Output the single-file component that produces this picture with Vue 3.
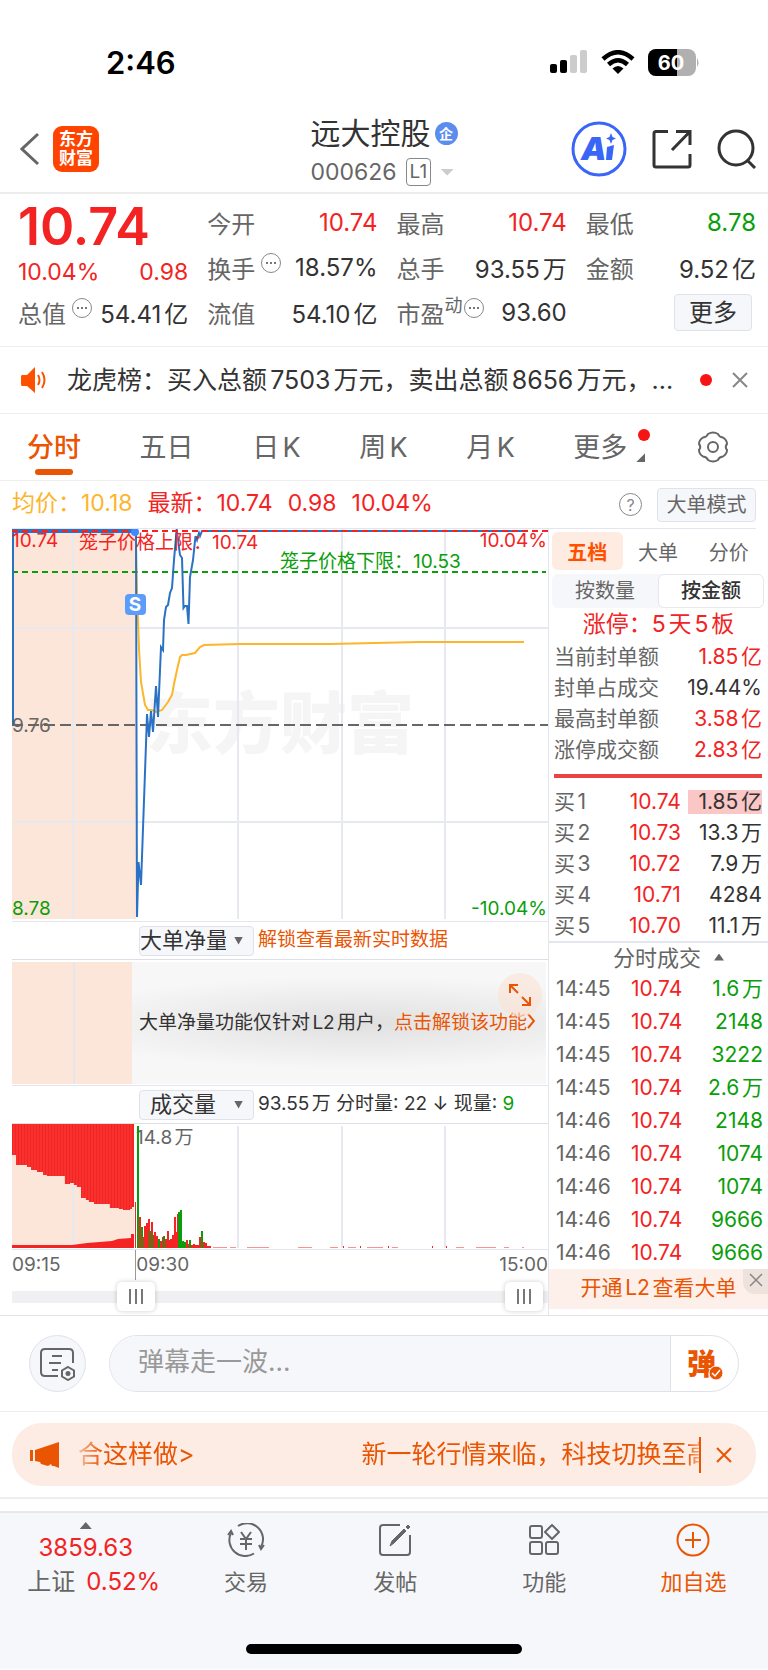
<!--个股行情页-->

<template>
  <div class="stock-page">
    <!-- 状态栏 -->
    <div class="status-bar">
      <span class="time">2:46</span>
      <div class="status-icons">
        <svg width="38" height="24" viewBox="0 0 38 24">
          <rect x="0" y="14" width="7" height="9" rx="2" fill="#000" />
          <rect x="10" y="10" width="7" height="13" rx="2" fill="#000" />
          <rect x="20" y="5" width="7" height="18" rx="2" fill="#ccc" />
          <rect x="30" y="0" width="7" height="23" rx="2" fill="#ccc" />
        </svg>
        <svg width="34" height="24" viewBox="0 0 34 24">
          <path d="M2 9 Q17 -4.500 32 9" fill="none" stroke="#000" stroke-width="4.500" />
          <path d="M7.500 14.500 Q17 6 26.500 14.500" fill="none" stroke="#000" stroke-width="4.500" />
          <path d="M11.500 18.500 Q17 13.500 22.500 18.500 L17 24 Z" fill="#000" />
        </svg>
        <svg width="52" height="27" viewBox="0 0 52 27">
          <rect x="0" y="0" width="48" height="27" rx="8" fill="#b0b0b0" />
          <path d="M8 0 H29 V27 H8 A8 8 0 0 1 0 19 V8 A8 8 0 0 1 8 0 Z" fill="#000" />
          <path d="M49 9 Q52 13.500 49 18 Z" fill="#b0b0b0" />
          <text x="23" y="21" text-anchor="middle" class="battery-num">60</text>
        </svg>
      </div>
    </div>

    <!-- 顶部导航 -->
    <header class="header">
      <div class="header-left">
        <button class="icon-btn" aria-label="返回">
          <svg width="20" height="34" viewBox="0 0 20 34">
            <path d="M18 2 L2 17 L18 32" fill="none" stroke="#666" stroke-width="3" />
          </svg>
        </button>
        <a href="#" class="logo"><span>东方</span><span>财富</span></a>
      </div>
      <div class="header-title">
        <h1>远大控股<i class="ent-badge">企</i></h1>
        <div class="code-row">
          <span>000626</span>
          <span class="level">L1</span>
          <i class="tri-down light"></i>
        </div>
      </div>
      <div class="header-right">
        <button class="icon-btn" aria-label="智能助手">
          <svg width="56" height="56" viewBox="0 0 56 56">
            <circle cx="28" cy="28" r="26" fill="#fff" stroke="#3a66f8" stroke-width="3" />
            <text x="10" y="39" class="ai-text">A</text>
            <path d="M36 26 L43 24 L41 39 L35 39 Z" fill="#3a66f8" />
            <path d="M40 12 L41.500 16 L45 17.500 L41.500 19 L40 23 L38.500 19 L35 17.500 L38.500 16 Z" fill="#3a66f8" />
          </svg>
        </button>
        <button class="icon-btn" aria-label="分享">
          <svg width="40" height="40" viewBox="0 0 40 40" fill="none" stroke="#333" stroke-width="3">
            <path d="M16 2.500 H4 Q2 2.500 2 4.500 V36 Q2 38 4 38 H36 Q38 38 38 36 V25" />
            <path d="M24 2.500 H38 V16 M38 2.500 L20 21" />
          </svg>
        </button>
        <button class="icon-btn" aria-label="搜索">
          <svg width="40" height="40" viewBox="0 0 40 40" fill="none" stroke="#333" stroke-width="3">
            <circle cx="19" cy="19" r="17" />
            <path d="M30 31 L38 39" />
          </svg>
        </button>
      </div>
    </header>

    <!-- 行情数据 -->
    <section class="quote">
      <div class="quote-col">
        <strong class="price">10.74</strong>
        <div class="quote-item red change"><span>10.04%</span><span>0.98</span></div>
        <div class="quote-item">
          <label>总值<i class="dots"></i></label><span>54.41亿</span>
        </div>
      </div>
      <div v-for="(col, i) in quoteCols" :key="i" class="quote-col">
        <div v-for="item in col" :key="item.label" class="quote-item">
          <label>{{ item.label }}<sup v-if="item.sup">{{ item.sup }}</sup><i v-if="item.dots" class="dots"></i></label>
          <span :class="item.color">{{ item.value }}</span>
        </div>
        <button v-if="i === 2" class="more-btn">更多</button>
      </div>
    </section>

    <!-- 公告 -->
    <section class="notice">
      <svg width="26" height="28" viewBox="0 0 26 28">
        <path d="M1 9 H6 L14 1 V27 L6 20 H1 Q0 20 0 18 V11 Q0 9 1 9 Z" fill="#ff5000" />
        <path d="M17 9 Q20 14 17 19 M21 6 Q26 14 21 22" fill="none" stroke="#ff5000" stroke-width="2" />
      </svg>
      <p>龙虎榜：买入总额7503万元，卖出总额8656万元，...</p>
      <i class="red-dot"></i>
      <button class="icon-btn" aria-label="关闭公告">
        <svg width="16" height="16" viewBox="0 0 16 16" stroke="#888" stroke-width="2"><path d="M1 1 L15 15 M15 1 L1 15" /></svg>
      </button>
    </section>

    <!-- 周期切换 -->
    <nav class="tabs">
      <button v-for="tab in tabs" :key="tab" class="tab" :class="{ active: tab === activeTab }" @click="activeTab = tab">
        {{ tab }}
      </button>
      <button class="tab tab-more">更多<i class="red-dot"></i><i class="corner"></i></button>
      <button class="icon-btn" aria-label="设置">
        <svg width="32" height="32" viewBox="0 0 32 32" fill="none" stroke="#666" stroke-width="2">
          <path d="M11 3 Q16 0 21 3 Q22 6 26 6.500 Q30 9 30 13 Q27.500 16 30 19 Q30 23 26 25.500 Q22 26 21 29 Q16 32 11 29 Q10 26 6 25.500 Q2 23 2 19 Q4.500 16 2 13 Q2 9 6 6.500 Q10 6 11 3 Z" />
          <circle cx="16" cy="16" r="5" />
        </svg>
      </button>
    </nav>

    <div class="legend">
      <span class="avg">均价：10.18</span>
      <span class="red">最新：10.74</span>
      <span class="red">0.98</span>
      <span class="red">10.04%</span>
      <button class="help" aria-label="帮助">?</button>
      <button class="mode-btn">大单模式</button>
    </div>

    <main class="board">
      <!-- 分时图 -->
      <div class="charts">
        <svg class="chart" viewBox="0 0 536 392">
          <rect x="0" y="0" width="124" height="390" fill="#fce5d9" />
          <text x="134" y="219" class="watermark">东方财富</text>
          <g class="grid">
            <path d="M0 99 H536 M0 293 H536" />
            <path d="M61 0 V390 M226 0 V390 M330 0 V390 M433 0 V390" />
          </g>
          <path d="M0 196 H536" stroke="#666" stroke-width="2" stroke-dasharray="11 5" />
          <path d="M0 43 H534" stroke="#0a9e0a" stroke-width="2" stroke-dasharray="6 4" />
          <polyline :points="avgLine" fill="none" stroke="#fdb52c" stroke-width="2" />
          <polyline :points="priceLine" fill="none" stroke="#2b72c4" stroke-width="2" />
          <path d="M0 2 H124" stroke="#2b72c4" stroke-width="4" />
          <path d="M0 2 H536" stroke="#f32323" stroke-width="2" stroke-dasharray="6 4" />
          <circle cx="123" cy="3" r="4" fill="#3d8bff" />
          <g class="chart-text">
            <text x="0" y="18" fill="#f32323">10.74</text>
            <text x="67" y="20" fill="#f32323">笼子价格上限：10.74</text>
            <text x="268" y="39" fill="#0a9e0a">笼子价格下限：10.53</text>
            <text x="535" y="18" fill="#f32323" text-anchor="end">10.04%</text>
            <text x="0" y="203" fill="#666">9.76</text>
            <text x="0" y="386" fill="#0a9e0a">8.78</text>
            <text x="535" y="386" fill="#0a9e0a" text-anchor="end">-10.04%</text>
          </g>
          <rect x="113" y="65" width="21" height="21" rx="4" fill="#5c9dfb" />
          <text x="123" y="82" text-anchor="middle" class="sell-mark">S</text>
        </svg>

        <div class="sub-head">
          <div class="select-wrap">
            <select aria-label="副图指标一"><option>大单净量</option><option>成交量</option></select>
          </div>
          <a href="#" class="orange">解锁查看最新实时数据</a>
        </div>
        <div class="locked">
          <div class="locked-pre"></div>
          <div class="locked-body">
            <p>大单净量功能仅针对L2用户，<a href="#" class="orange">点击解锁该功能<svg width="8" height="16" viewBox="0 0 8 16" fill="none" stroke="#ea5504" stroke-width="2"><path d="M1 1 L7 8 L1 15" /></svg></a></p>
            <button class="expand" aria-label="展开">
              <svg width="24" height="24" viewBox="0 0 24 24" fill="none" stroke="#ea5504" stroke-width="2">
                <path d="M2 10 V2 H10 M2 2 L10 10 M22 14 V22 H14 M22 22 L14 14" />
              </svg>
            </button>
          </div>
        </div>
        <div class="sub-head">
          <div class="select-wrap">
            <select aria-label="副图指标二"><option>成交量</option><option>大单净量</option></select>
          </div>
          <span>93.55万 分时量: 22 ↓ 现量: <b class="green">9</b></span>
        </div>
        <svg class="chart volume" viewBox="0 0 536 125">
          <rect x="0" y="0" width="122" height="124" fill="#fce5d9" />
          <path class="grid" d="M61 0 V124 M226 2 V124 M330 2 V124 M433 2 V124" />
          <path :d="preTop" fill="#f52424" />
          <path d="M0 124 V121 L60 121 L75 119 L100 117 L106 115 L119 114 V110 H122 V124 Z" fill="#f52424" />
          <path :d="stripes" stroke="#fb6a5e" stroke-width="0.400" />
          <text x="124" y="20" class="chart-text" fill="#666">14.8万</text>
          <rect
            v-for="(bar, i) in volumeBars" :key="i"
            :x="bar[0]" :y="124 - bar[1]" :width="bar[3] || 2" :height="bar[1]"
            :fill="bar[2] ? '#0a9e0a' : '#f52424'"
          />
        </svg>
        <div class="axis"><span>09:15</span><span class="open">09:30</span><span>15:00</span></div>
        <div class="range">
          <input v-model="rangeStart" type="range" min="0" max="100" aria-label="起始时间">
          <input v-model="rangeEnd" type="range" min="0" max="100" aria-label="结束时间">
        </div>
      </div>

      <!-- 盘口 -->
      <aside class="depth">
        <div class="depth-tabs">
          <button v-for="t in depthTabs" :key="t" :class="{ active: t === depthTab }" @click="depthTab = t">{{ t }}</button>
        </div>
        <div class="segment">
          <button v-for="m in modes" :key="m" :class="{ active: m === mode }" @click="mode = m">{{ m }}</button>
        </div>
        <p class="limit-up">涨停：5天5板</p>
        <table class="seal">
          <tbody>
            <tr v-for="row in sealRows" :key="row[0]">
              <th>{{ row[0] }}</th>
              <td :class="row[2]">{{ row[1] }}</td>
            </tr>
          </tbody>
        </table>
        <div class="ratio-bar"></div>
        <table class="levels">
          <tbody>
            <tr v-for="(row, i) in buyRows" :key="row[0]">
              <th>买{{ i + 1 }}</th>
              <td class="red">{{ row[0] }}</td>
              <td><span :class="{ mark: i === 0 }">{{ row[1] }}</span></td>
            </tr>
          </tbody>
        </table>
        <button class="deal-head">分时成交<i class="tri-up"></i></button>
        <table class="deals">
          <tbody>
            <tr v-for="(row, i) in deals" :key="i">
              <th>{{ row[0] }}</th>
              <td class="red">10.74</td>
              <td class="green">{{ row[1] }}</td>
            </tr>
          </tbody>
        </table>
        <div class="open-l2">
          <a href="#" class="orange">开通L2查看大单</a>
          <button class="l2-close" aria-label="关闭">
            <svg width="14" height="14" viewBox="0 0 14 14" stroke="#888" stroke-width="1.500"><path d="M1 1 L13 13 M13 1 L1 13" /></svg>
          </button>
        </div>
      </aside>
    </main>

    <!-- 弹幕 -->
    <section class="danmu">
      <button class="danmu-set" aria-label="弹幕设置">
        <svg width="36" height="34" viewBox="0 0 36 34" fill="none" stroke="#666" stroke-width="2">
          <path d="M18 29 H5 Q1 29 1 25 V6 Q1 2 5 2 H29 Q33 2 33 6 V16" />
          <path d="M12 9 H22 M9 16 H21 M12 23 H18" />
          <path d="M28 20 L34 23.500 V29.500 L28 33 L22 29.500 V23.500 Z" />
          <circle cx="28" cy="26.500" r="1.500" fill="#666" />
        </svg>
      </button>
      <div class="danmu-box">
        <input type="text" placeholder="弹幕走一波..." aria-label="弹幕内容">
        <button class="danmu-toggle" aria-label="弹幕开关">
          弹
          <svg width="16" height="16" viewBox="0 0 16 16"><circle cx="8" cy="8" r="7" fill="#ea5504" stroke="#fff" /><path d="M4 8 L7 11 L12 5" fill="none" stroke="#fff" stroke-width="1.500" /></svg>
        </button>
      </div>
    </section>

    <!-- 跑马灯 -->
    <section class="banner-wrap">
      <div class="banner">
        <svg width="30" height="26" viewBox="0 0 30 26" fill="#ea5504">
          <path d="M0 8 H3 V19 H0 Z M5 8 L29 0 V26 L24 24 L22 24 L21 22 L18 24 L11 22 L10 20 L5 19 Z" />
        </svg>
        <div class="marquee"><span>合这样做&gt;</span><span>新一轮行情来临，科技切换至高</span></div>
        <button class="icon-btn" aria-label="关闭">
          <svg width="16" height="16" viewBox="0 0 16 16" stroke="#ea5504" stroke-width="2"><path d="M1 1 L15 15 M15 1 L1 15" /></svg>
        </button>
      </div>
    </section>

    <!-- 底部导航 -->
    <footer class="footer">
      <div class="footer-nav">
        <a href="#" class="index">
          <i class="tri-up"></i>
          <span class="red">3859.63</span>
          <span class="index-name">上证<em class="red">0.52%</em></span>
        </a>
        <a href="#">
          <svg width="38" height="34" viewBox="0 0 38 34" fill="none" stroke="#666" stroke-width="2">
            <path d="M11 3 A16 16 0 0 1 34 24 M27 30.500 A16 16 0 0 1 4 10" />
            <path d="M37 22 L34 26 L32 22 M1 12 L4 8 L6 12" />
            <path d="M14 9 L19 16 L24 9 M13 16 H25 M13 21 H25 M19 16 V27" />
          </svg>
          <span>交易</span>
        </a>
        <a href="#">
          <svg width="34" height="34" viewBox="0 0 34 34" fill="none" stroke="#666" stroke-width="2">
            <path d="M22 2 H5 Q2 2 2 5 V29 Q2 32 5 32 H29 Q32 32 32 29 V12" />
            <path d="M12 23 L14 18 L26 6 L28 8 L16 20 Z M28 4 L30 2 L32 4 L30 6 Z" fill="#666" stroke-width="1" />
          </svg>
          <span>发帖</span>
        </a>
        <a href="#">
          <svg width="32" height="34" viewBox="0 0 32 34" fill="none" stroke="#666" stroke-width="2">
            <rect x="2" y="3" width="12" height="12" rx="2" />
            <rect x="2" y="19" width="12" height="12" rx="2" />
            <rect x="18" y="19" width="12" height="12" rx="2" />
            <path d="M24 2 L31 9 L24 16 L17 9 Z" stroke-linejoin="round" />
          </svg>
          <span>功能</span>
        </a>
        <a href="#" class="orange">
          <svg width="34" height="34" viewBox="0 0 34 34" fill="none" stroke="#ea5504" stroke-width="2">
            <circle cx="17" cy="17" r="15.500" />
            <path d="M17 9 V25 M9 17 H25" />
          </svg>
          <span>加自选</span>
        </a>
      </div>
      <div class="home-bar"></div>
    </footer>
  </div>
</template>

<script setup>
import { ref } from 'vue'

const tabs = ['分时', '五日', '日K', '周K', '月K']
const activeTab = ref('分时')
const depthTabs = ['五档', '大单', '分价']
const depthTab = ref('五档')
const modes = ['按数量', '按金额']
const mode = ref('按金额')
const rangeStart = ref(21)
const rangeEnd = ref(99)

const quoteCols = [
  [
    { label: '今开', value: '10.74', color: 'red' },
    { label: '换手', value: '18.57%', dots: true },
    { label: '流值', value: '54.10亿' }
  ],
  [
    { label: '最高', value: '10.74', color: 'red' },
    { label: '总手', value: '93.55万' },
    { label: '市盈', value: '93.60', sup: '动', dots: true }
  ],
  [
    { label: '最低', value: '8.78', color: 'green' },
    { label: '金额', value: '9.52亿' }
  ]
]

const sealRows = [
  ['当前封单额', '1.85亿', 'red'],
  ['封单占成交', '19.44%', ''],
  ['最高封单额', '3.58亿', 'red'],
  ['涨停成交额', '2.83亿', 'red']
]

const buyRows = [
  ['10.74', '1.85亿'],
  ['10.73', '13.3万'],
  ['10.72', '7.9万'],
  ['10.71', '4284'],
  ['10.70', '11.1万']
]

const deals = [
  ['14:45', '1.6万'],
  ['14:45', '2148'],
  ['14:45', '3222'],
  ['14:45', '2.6万'],
  ['14:46', '2148'],
  ['14:46', '1074'],
  ['14:46', '1074'],
  ['14:46', '9666'],
  ['14:46', '9666']
]

// 价格线
const priceLine = '1,196 1,2 124,2 124.5,200 125,388 126.5,333 129,356 134,215 135,185 137,208 139,182 141,203 144,157 146,188 149,118 151,121 152,91 154,78 156,76 158,64 160,59 162,31 164.7,0 166,11 168,26 170,29 171.500,79 173,77 175,77 176.500,95 178,48 181,31 183.500,7 185,11 187,4 188,7 190,2 511,2'

// 均价线
const avgLine = '124,16 125,60 127,120 129,153 133,176 136,181 140,181 144,183 150,181 156,173 160,166 162,155 165,141 168,128 170,126 174,126 183,124 188,118 192,116 228,115 318,115 408,113 512,113'

// 集合竞价未匹配量 [x, 高度]
const preSteps = [
  [0, 31], [4, 41], [15, 43], [19, 46], [25, 48], [31, 51], [35, 52], [53, 60], [58, 59], [62, 61],
  [65, 63], [69, 74], [74, 76], [77, 78], [82, 80], [98, 84], [107, 85], [111, 86], [118, 85], [120, 83]
]
const preTop = 'M0 0 ' + preSteps.map(([x, h]) => `H${x} V${h}`).join(' ') + ' H122 V0 Z'
const stripes = Array.from({ length: 40 }, (_, i) => `M${i * 3 + 2} 0 V${preSteps.filter(s => s[0] <= i * 3 + 2).pop()[1]}`).join(' ')

// 成交量柱 [x, 高度, 是否绿色, 宽度]
const volumeBars = [
  [123, 46, 0, 1], [125, 122, 1], [127, 31, 0], [129, 21, 1], [131, 11, 0], [132, 22, 0], [134, 25, 0], [136, 29, 0],
  [137, 17, 1], [139, 26, 0], [141, 13, 1], [142, 16, 0], [144, 12, 0], [146, 9, 1], [148, 7, 0], [150, 11, 0],
  [151, 12, 1], [153, 9, 0], [155, 17, 0], [156, 8, 0], [158, 9, 0], [160, 13, 0], [162, 31, 0], [163, 16, 0],
  [165, 34, 0], [166, 36, 1], [168, 38, 1], [170, 7, 1], [172, 6, 1], [174, 8, 0], [176, 4, 0], [177, 8, 1],
  [179, 3, 0], [181, 4, 0], [183, 3, 0], [185, 3, 0], [187, 11, 0], [189, 17, 1], [191, 6, 0], [193, 5, 0],
  [195, 2, 0], [197, 2, 0], [201, 0.5, 0, 14], [218, 0.5, 0, 6], [235, 0.5, 0, 22], [286, 0.5, 0, 14], [318, 0.5, 0, 8],
  [331, 2, 0, 1], [336, 0.5, 0, 8], [348, 2, 0, 1], [355, 0.5, 0, 16], [376, 2, 0, 1], [380, 0.5, 0, 6], [420, 2, 0, 1],
  [434, 2, 0, 1], [444, 0.5, 0, 8], [464, 0.5, 0, 20], [492, 0.5, 0, 5], [510, 0.5, 0, 2]
]
</script>

<style>
body {
  margin: 0;
  background: #fff;
}
</style>

<style scoped>
.stock-page {
  font-family: Inter, "Noto Sans CJK SC", sans-serif;
  color: #333;
  background: #fff;
  text-autospace: normal;
}

button,
input,
select {
  font-family: inherit;
  color: inherit;
  text-autospace: inherit;
}

button {
  padding: 0;
  border: none;
  background: none;
  cursor: pointer;
}

a {
  color: inherit;
  text-decoration: none;
}

i,
em {
  font-style: normal;
}

svg {
  flex: none;
}

.icon-btn {
  display: flex;
}

.red {
  color: #f32323;
}

.green {
  color: #0a9e0a;
}

.orange {
  color: #ea5504;
}

.red-dot {
  width: 12px;
  height: 12px;
  border-radius: 50%;
  background: #f71414;
}

.tri-up,
.tri-down {
  display: inline-block;
  width: 12px;
  height: 7px;
  background: #666;
  clip-path: polygon(50% 0, 100% 100%, 0 100%);
}

.tri-down.light {
  width: 14px;
  background: #ccc;
  clip-path: polygon(0 0, 100% 0, 50% 100%);
}

/* 状态栏 */
.status-bar {
  display: flex;
  justify-content: space-between;
  align-items: center;
  height: 104px;
  padding: 20px 68px 0 106px;
  box-sizing: border-box;
}

.time {
  font-size: 31px;
  font-weight: 600;
  color: #000;
}

.status-icons {
  display: flex;
  align-items: center;
  gap: 13px;
}

.battery-num {
  font-size: 20px;
  font-weight: 700;
  fill: #fff;
}

/* 顶部导航 */
.header {
  display: grid;
  grid-template-columns: 1fr auto 1fr;
  align-items: center;
  height: 90px;
  padding: 2px 11px 0;
  box-sizing: border-box;
  border-bottom: 2px solid #ececec;
}

.header-left {
  display: flex;
  align-items: center;
  gap: 13px;
  padding-left: 9px;
}

.logo {
  display: flex;
  flex-direction: column;
  align-items: center;
  justify-content: center;
  width: 46px;
  height: 46px;
  border-radius: 9px;
  background: #ff4400;
  color: #fff;
  font-size: 17px;
  font-weight: 700;
  line-height: 19px;
}

.header-title {
  padding-top: 8px;
}

.header-title h1 {
  display: flex;
  align-items: center;
  gap: 4px;
  margin: 0;
  font-size: 30px;
  font-weight: 400;
  line-height: 38px;
}

.ent-badge {
  width: 23px;
  height: 23px;
  border-radius: 50%;
  background: #5b8def;
  color: #fff;
  font-size: 14px;
  font-weight: 700;
  line-height: 23px;
  text-align: center;
}

.code-row {
  display: flex;
  align-items: center;
  gap: 9px;
  height: 40px;
  color: #666;
  font-size: 23px;
}

.level {
  padding: 0 3px;
  border: 1px solid #888;
  border-radius: 4px;
  font-size: 19px;
  line-height: 26px;
}

.header-right {
  display: flex;
  align-items: center;
  justify-content: flex-end;
  gap: 25px;
}

.ai-text {
  font-size: 32px;
  font-weight: 900;
  font-style: italic;
  fill: #3a66f8;
}

/* 行情数据 */
.quote {
  display: grid;
  grid-template-columns: repeat(4, 1fr);
  gap: 19px;
  padding: 6px 12px 11px 18px;
  border-bottom: 1px solid #eee;
}

.quote-item {
  display: flex;
  align-items: center;
  justify-content: space-between;
  height: 45px;
  font-size: 24px;
  white-space: nowrap;
}

.quote-item label {
  display: flex;
  align-items: center;
  color: #666;
}

.quote-item sup {
  align-self: flex-start;
  font-size: 18px;
  line-height: 22px;
}

.quote .change {
  height: 36px;
  font-size: 23px;
}

.price {
  display: block;
  height: 54px;
  color: #f32323;
  font-size: 52px;
  font-weight: 600;
  line-height: 54px;
}

.dots {
  position: relative;
  width: 18px;
  height: 18px;
  margin: 0 0 10px 6px;
  border: 1px solid #888;
  border-radius: 50%;
}

.quote-item sup + .dots {
  margin-left: 1px;
}

.dots::after {
  position: absolute;
  top: 8px;
  left: 8px;
  width: 2px;
  height: 2px;
  background: #777;
  box-shadow: -4px 0 #777, 4px 0 #777;
  content: "";
}

.more-btn {
  display: block;
  width: 78px;
  height: 37px;
  margin: 4px 4px 0 auto;
  border: 1px solid #dfe2ea;
  border-radius: 4px;
  background: #f6f7fa;
  font-size: 24px;
  line-height: 32px;
}

/* 公告 */
.notice {
  display: flex;
  align-items: center;
  height: 66px;
  padding: 0 20px 0 21px;
  border-bottom: 1px solid #eee;
}

.notice p {
  flex: 1;
  overflow: hidden;
  margin: 0 20px;
  font-size: 25px;
  line-height: 36px;
  white-space: nowrap;
}

.notice .icon-btn {
  margin-left: 20px;
}

/* 周期切换 */
.tabs {
  display: flex;
  align-items: center;
  justify-content: space-between;
  height: 66px;
  padding: 0 39px 0 27px;
  border-bottom: 1px solid #eee;
}

.tab {
  position: relative;
  height: 66px;
  padding-bottom: 3px;
  color: #666;
  font-size: 27px;
}

.tab.active {
  color: #ea5504;
  font-weight: 500;
}

.tab.active::after {
  position: absolute;
  bottom: 5px;
  left: 8px;
  right: 8px;
  height: 6px;
  border-radius: 3px;
  background: #ea5504;
  content: "";
}

.tab-more {
  padding-right: 11px;
}

.tab-more .red-dot {
  position: absolute;
  top: 15px;
  right: -12px;
}

.corner {
  position: absolute;
  right: -7px;
  bottom: 18px;
  width: 9px;
  height: 9px;
  background: #666;
  clip-path: polygon(100% 0, 100% 100%, 0 100%);
}

/* 图例 */
.legend {
  display: flex;
  align-items: center;
  gap: 15px;
  height: 47px;
  margin: 0 12px;
  border-bottom: 1px solid #e3e6ee;
  font-size: 23px;
  line-height: 28px;
}

.legend span {
  padding-bottom: 3px;
}

.avg {
  color: #fdb52c;
}

.help {
  width: 23px;
  height: 23px;
  margin-left: auto;
  border: 1px solid #888;
  border-radius: 50%;
  color: #888;
  font-size: 16px;
  line-height: 20px;
}

.mode-btn {
  width: 99px;
  height: 34px;
  border: 1px solid #dfe2ea;
  border-radius: 4px;
  background: #f6f7fa;
  color: #666;
  font-size: 20px;
  line-height: 30px;
}

/* 图表区 */
.board {
  display: grid;
  grid-template-columns: 549fr 219fr;
  border-bottom: 1px solid #e3e3e6;
}

.charts {
  min-width: 0;
  padding-left: 12px;
  border-right: 1px solid #e3e6ee;
}

.chart {
  display: block;
  width: 100%;
  border-bottom: 1px solid #e3e6ee;
}

.grid {
  fill: none;
  stroke: #e6e9f0;
  stroke-width: 2;
}

.chart-text {
  font-size: 19px;
}

.watermark {
  fill: #f5f5f5;
  font-size: 67px;
  font-weight: 900;
}

.sell-mark {
  fill: #fff;
  font-size: 19px;
  font-weight: 700;
}

.sub-head {
  display: flex;
  align-items: center;
  gap: 4px;
  height: 37px;
  padding-left: 127px;
  border-bottom: 1px solid #dcdfe8;
  font-size: 19px;
  line-height: 26px;
  white-space: nowrap;
}

.sub-head > :last-child {
  padding-bottom: 2px;
}

.sub-head b {
  font-weight: 400;
}

.select-wrap {
  position: relative;
}

.select-wrap::after {
  position: absolute;
  top: 11px;
  right: 11px;
  width: 9px;
  height: 8px;
  background: #666;
  clip-path: polygon(0 0, 100% 0, 50% 100%);
  pointer-events: none;
  content: "";
}

.select-wrap select {
  display: block;
  width: 115px;
  height: 30px;
  padding: 0 27px 2px 0;
  border: 1px solid #dfe2ea;
  border-radius: 4px;
  background: #f6f7fa;
  font-size: 22px;
  line-height: 26px;
  text-align-last: center;
  appearance: none;
}

.locked {
  display: flex;
  height: 122px;
  padding: 2px 2px 1px 0;
  border-bottom: 1px solid #e3e6ee;
}

.locked-pre {
  flex: none;
  width: 120px;
  background: linear-gradient(#e6e6ea, #e6e6ea) 61px 0 / 2px 100% no-repeat #fce5d9;
}

.locked-body {
  position: relative;
  display: flex;
  flex: 1;
  align-items: center;
  padding-left: 7px;
  background: radial-gradient(ellipse 75% 38% at 55% 50%, #e0e0e0, #f7f7f7);
  font-size: 19px;
  white-space: nowrap;
}

.locked-body p {
  margin: 0;
  padding-bottom: 5px;
}

.expand {
  position: absolute;
  top: 11px;
  right: 4px;
  display: flex;
  align-items: center;
  justify-content: center;
  width: 44px;
  height: 44px;
  border-radius: 50%;
  background: rgba(252, 226, 212, 0.6);
}

.axis {
  display: flex;
  height: 30px;
  color: #666;
  font-size: 19px;
  line-height: 30px;
}

.axis span:first-child {
  width: 23%;
}

.axis .open {
  flex: 1;
  border-left: 1px solid #999;
}

.range {
  position: relative;
  height: 32px;
  margin-bottom: 3px;
  background: linear-gradient(#f0f0f3, #f0f0f3) 0 11px / 100% 12px no-repeat;
}

.range input {
  position: absolute;
  inset: 0;
  width: 100%;
  height: 32px;
  margin: 0;
  background: none;
  pointer-events: none;
  appearance: none;
}

.range input::-webkit-slider-thumb {
  width: 38px;
  height: 29px;
  border-radius: 5px;
  background:
    linear-gradient(#777, #777) 12px 7px / 2px 15px no-repeat,
    linear-gradient(#777, #777) 18px 7px / 2px 15px no-repeat,
    linear-gradient(#777, #777) 24px 7px / 2px 15px no-repeat,
    #fff;
  box-shadow: 0 0 5px rgba(0, 0, 0, 0.2);
  pointer-events: auto;
  appearance: none;
}

/* 盘口 */
.depth {
  display: flex;
  flex-direction: column;
  min-width: 0;
  font-size: 21px;
}

.depth-tabs {
  display: flex;
  margin: 3px 4px 4px 3px;
}

.depth-tabs button {
  flex: 1;
  height: 38px;
  border-radius: 6px;
  color: #666;
  font-size: 20px;
}

.depth-tabs .active {
  background: #feece3;
  color: #ff5000;
  font-weight: 700;
}

.segment {
  display: flex;
  margin: 0 4px 0 3px;
  border-radius: 6px;
  background: #f6f7fa;
}

.segment button {
  flex: 1;
  height: 34px;
  border: 1px solid transparent;
  border-radius: 6px;
  color: #666;
  font-size: 20px;
  line-height: 30px;
}

.segment .active {
  border-color: #e8e8ec;
  background: #fff;
  color: #333;
  font-weight: 500;
}

.limit-up {
  margin: 0;
  color: #f32323;
  font-size: 23px;
  line-height: 33px;
  text-align: center;
}

.depth table {
  width: calc(100% - 11px);
  margin: 0 6px 0 5px;
  border-collapse: collapse;
  table-layout: fixed;
}

.depth th,
.depth td {
  height: 31px;
  padding: 0;
  line-height: 24px;
  white-space: nowrap;
}

.depth th {
  color: #666;
  font-weight: 400;
  text-align: left;
}

.depth td {
  text-align: right;
}

.levels th,
.deals th {
  width: 29%;
}

.levels td:last-child,
.deals td:last-child {
  width: 39%;
}

.ratio-bar {
  height: 4px;
  margin: 9px 6px 8px 5px;
  background: #ea4444;
}

.mark {
  display: inline-block;
  width: 74px;
  background: #fbc6c6;
}

.deal-head {
  height: 31px;
  padding-left: 20px;
  border-top: 2px solid #e3e6ee;
  color: #666;
  font-size: 22px;
  line-height: 28px;
}

.deal-head .tri-up {
  margin: 0 0 5px 13px;
  width: 10px;
}

.depth .deals {
  width: calc(100% - 12px);
  margin: 0 5px 0 7px;
}

.depth .deals th,
.depth .deals td {
  height: 33px;
}

.open-l2 {
  position: relative;
  height: 40px;
  background: #fdf0ea;
  line-height: 38px;
  text-align: center;
}

.l2-close {
  position: absolute;
  top: 0;
  right: 0;
  width: 25px;
  height: 25px;
  border-radius: 0 0 0 12px;
  background: #eee2dd;
  line-height: 20px;
}

/* 弹幕 */
.danmu {
  display: flex;
  gap: 23px;
  padding: 19px 29px;
  border-bottom: 1px solid #eee;
}

.danmu-set {
  display: flex;
  flex: none;
  align-items: center;
  justify-content: center;
  width: 57px;
  height: 57px;
  border: 1px solid #dfe2ea;
  border-radius: 50%;
  background: #f6f7fa;
}

.danmu-box {
  display: flex;
  flex: 1;
  overflow: hidden;
  height: 55px;
  border: 1px solid #dfe2ea;
  border-radius: 29px;
}

.danmu-box input {
  flex: 1;
  min-width: 0;
  padding: 0 28px 5px;
  border: none;
  background: #f6f7fa;
  font-size: 26px;
}

.danmu-box input::placeholder {
  color: #999;
}

.danmu-toggle {
  position: relative;
  width: 68px;
  padding: 0 6px 3px 0;
  border-left: 1px solid #dfe2ea;
  color: #ea5504;
  font-size: 29px;
  font-weight: 900;
}

.danmu-toggle svg {
  position: absolute;
  right: 14px;
  bottom: 10px;
}

/* 跑马灯 */
.banner-wrap {
  padding: 11px 12px;
  border-bottom: 2px solid #eee;
}

.banner {
  display: flex;
  align-items: center;
  gap: 18px;
  height: 63px;
  padding: 0 24px 0 18px;
  border-radius: 30px;
  background: #fdece3;
  color: #ea5504;
}

.marquee {
  display: flex;
  flex: 1;
  gap: 167px;
  overflow: hidden;
  height: 36px;
  border-right: 2px solid #ea5504;
  font-size: 25px;
  line-height: 34px;
  white-space: nowrap;
}

.marquee span:first-child {
  mask-image: linear-gradient(90deg, rgba(0, 0, 0, 0.3), #000 24px);
}

.marquee span:last-child {
  mask-image: linear-gradient(90deg, #000 325px, transparent 346px);
}

.banner .icon-btn {
  margin-left: -3px;
}

/* 底部导航 */
.footer {
  margin-top: 12px;
  padding-bottom: 15px;
  border-top: 2px solid #e6e8ea;
  background: #f6f7fa;
}

.footer-nav {
  display: grid;
  grid-template-columns: 23fr 20fr 20fr 20fr 20fr;
  padding-top: 9px;
}

.footer-nav a {
  display: flex;
  flex-direction: column;
  align-items: center;
  justify-content: space-between;
  height: 76px;
  font-size: 22px;
  line-height: 32px;
}

.footer-nav a:not(.orange) {
  color: #666;
}

.footer-nav a svg {
  margin-top: 1px;
}

.footer-nav .index {
  font-size: 24px;
}

.index-name {
  display: flex;
  gap: 11px;
  padding-left: 16px;
}

.footer-nav .red {
  color: #f32323;
}

.home-bar {
  width: 36%;
  height: 10px;
  margin: 46px auto 0;
  border-radius: 5px;
  background: #000;
}
</style>
